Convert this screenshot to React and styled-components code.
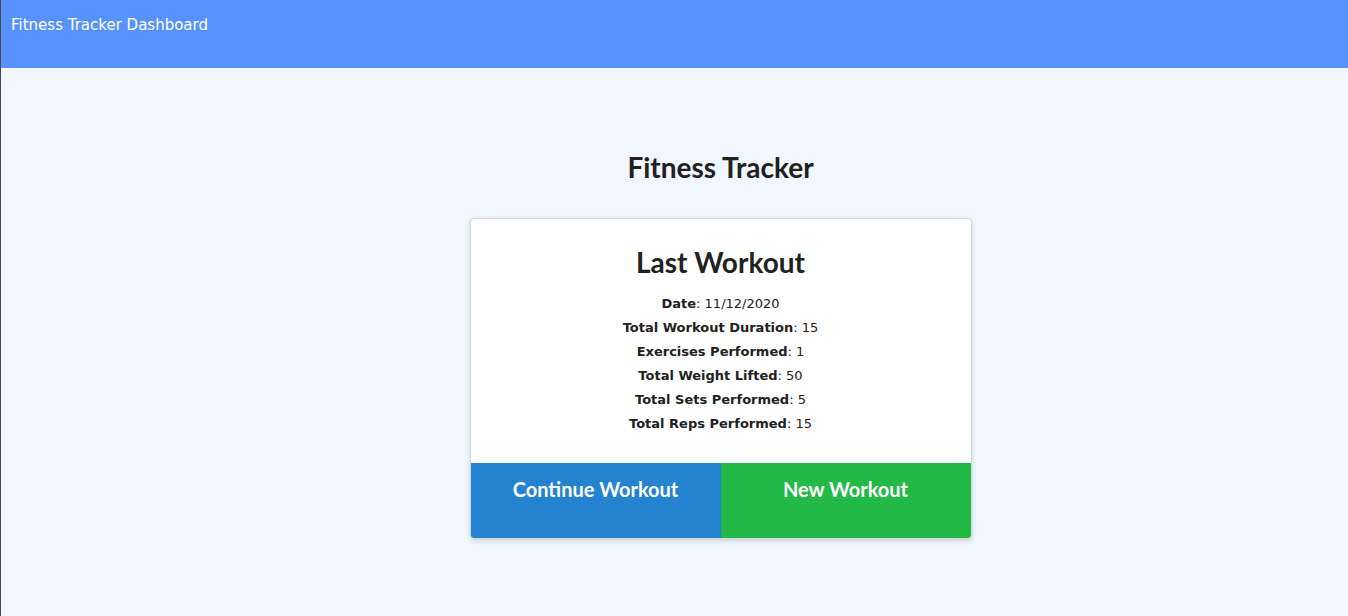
import React from "react";
import styled, { createGlobalStyle } from "styled-components";

const GlobalStyle = createGlobalStyle`
  html, body {
    margin: 0;
    padding: 0;
    background: #f0f7ff;
  }
  body {
    font-family: "DejaVu Sans", Verdana, sans-serif;
    color: #212529;
  }
`;

const Page = styled.div`
  min-height: 616px;
  border-left: 1px solid #4a4a4a;
  box-sizing: border-box;
`;

const Header = styled.header`
  height: 68px;
  background: #5893fd;
  padding: 16px 10px 0;
  box-sizing: border-box;
  color: #ffffff;
  font-size: 15px;
`;

const Main = styled.main`
  display: flex;
  flex-direction: column;
  align-items: center;
  padding: 81px 0 0 92px;
`;

const Title = styled.h1`
  margin: 0 0 33px;
  font-family: Lato, "Open Sans", sans-serif;
  font-weight: 700;
  font-size: 28px;
  line-height: 36px;
  color: #212121;
`;

const Card = styled.section`
  width: 500px;
  background: #ffffff;
  border: 1px solid #d6d6d6;
  border-radius: 4px;
  box-shadow: 0 2px 5px rgba(0, 0, 0, 0.15);
  overflow: hidden;
`;

const CardBody = styled.div`
  padding: 25px 20px 27px;
  text-align: center;
`;

const CardTitle = styled.h2`
  margin: 0 0 12px;
  font-family: Lato, "Open Sans", sans-serif;
  font-weight: 700;
  font-size: 28px;
  line-height: 36px;
  color: #212121;
`;

const Stat = styled.p`
  margin: 0;
  font-size: 13px;
  line-height: 24px;
  color: #212121;

  strong {
    font-weight: 700;
  }
`;

const Actions = styled.div`
  display: grid;
  grid-template-columns: 1fr 1fr;
`;

const ActionButton = styled.button`
  height: 75px;
  border: none;
  padding: 13px 0 0;
  display: flex;
  justify-content: center;
  align-items: flex-start;
  background: ${(p) => p.$bg};
  color: #ffffff;
  font-family: Lato, "Open Sans", sans-serif;
  font-weight: 700;
  font-size: 20px;
  line-height: 26px;
  cursor: pointer;
`;

const stats = [
  ["Date", "11/12/2020"],
  ["Total Workout Duration", "15"],
  ["Exercises Performed", "1"],
  ["Total Weight Lifted", "50"],
  ["Total Sets Performed", "5"],
  ["Total Reps Performed", "15"],
];

const App = () => {
  return (
    <Page>
      <GlobalStyle />
      <Header>Fitness Tracker Dashboard</Header>
      <Main>
        <Title>Fitness Tracker</Title>
        <Card>
          <CardBody>
            <CardTitle>Last Workout</CardTitle>
            {stats.map(([label, value]) => (
              <Stat key={label}>
                <strong>{label}</strong>: {value}
              </Stat>
            ))}
          </CardBody>
          <Actions>
            <ActionButton $bg="#2383d1">Continue Workout</ActionButton>
            <ActionButton $bg="#22b947">New Workout</ActionButton>
          </Actions>
        </Card>
      </Main>
    </Page>
  );
};

export default App;
